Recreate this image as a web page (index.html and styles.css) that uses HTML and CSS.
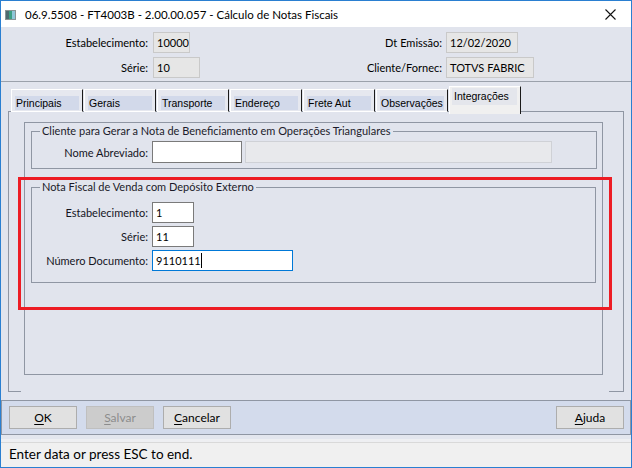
FILE: index.html
```html
<!DOCTYPE html>
<html lang="pt">
<head>
<meta charset="utf-8">
<title>Cálculo de Notas Fiscais</title>
<link rel="stylesheet" href="styles.css">
</head>
<body>
<div class="window">
  <div class="titlebar">
    <svg class="app-icon" width="11" height="10" viewBox="0 0 11 10">
      <rect x="0.5" y="0.5" width="10" height="9" fill="#dfe6e6" stroke="#8a9494"/>
      <rect x="1" y="1" width="3" height="8" fill="#4d6b70"/>
      <rect x="4" y="1" width="3" height="8" fill="#3c9f83"/>
      <rect x="7" y="1" width="3" height="8" fill="#8fc6d8"/>
    </svg>
    <span class="title-text">06.9.5508 - FT4003B - 2.00.00.057 - Cálculo de Notas Fiscais</span>
    <svg class="close-icon" width="11" height="11" viewBox="0 0 11 11">
      <path d="M0.5 0.5 L10.5 10.5 M10.5 0.5 L0.5 10.5" stroke="#111" stroke-width="1.1" fill="none"/>
    </svg>
  </div>

  <div class="header">
    <span class="lbl">Estabelecimento:</span>
    <span class="field"><span class="ro w37">10000</span></span>
    <span class="lbl lbl-r">Dt Emissão:</span>
    <span class="field"><span class="ro w72">12/02/2020</span></span>
    <span class="lbl">Série:</span>
    <span class="field"><span class="ro w47">10</span></span>
    <span class="lbl lbl-r">Cliente/Fornec:</span>
    <span class="field"><span class="ro w88">TOTVS FABRIC</span></span>
  </div>

  <div class="tabs">
    <div class="tab"><span class="tab-label">Principais</span></div>
    <div class="tab"><span class="tab-label">Gerais</span></div>
    <div class="tab"><span class="tab-label">Transporte</span></div>
    <div class="tab"><span class="tab-label">Endereço</span></div>
    <div class="tab"><span class="tab-label">Frete Aut</span></div>
    <div class="tab"><span class="tab-label">Observações</span></div>
    <div class="tab tab-active"><span class="tab-label">Integrações</span></div>
  </div>

  <div class="panel">
    <div class="inner">
      <fieldset class="group g1">
        <legend>Cliente para Gerar a Nota de Beneficiamento em Operações Triangulares</legend>
        <div class="row">
          <span class="glbl">Nome Abreviado:</span>
          <span class="inp w90"></span>
          <span class="inp-dis w307"></span>
        </div>
      </fieldset>
      <fieldset class="group g2">
        <legend>Nota Fiscal de Venda com Depósito Externo</legend>
        <div class="row">
          <span class="glbl">Estabelecimento:</span>
          <span class="inp w42">1</span>
        </div>
        <div class="row">
          <span class="glbl">Série:</span>
          <span class="inp w42">11</span>
        </div>
        <div class="row">
          <span class="glbl">Número Documento:</span>
          <span class="inp inp-focus w141"><span class="caret">9110111</span></span>
        </div>
      </fieldset>
    </div>
  </div>

  <div class="buttonbar">
    <button class="btn"><u>O</u>K</button>
    <button class="btn btn-dis"><u>S</u>alvar</button>
    <button class="btn"><u>C</u>ancelar</button>
    <span class="spacer"></span>
    <button class="btn"><u>A</u>juda</button>
  </div>
  <div class="strip"></div>
  <div class="status">Enter data or press ESC to end.</div>
</div>
<div class="highlight"></div>
</body>
</html>
```

FILE: styles.css
```css
* { box-sizing: border-box; }

html, body {
  margin: 0;
  padding: 0;
}

body {
  width: 632px;
  height: 468px;
  position: relative;
  font-family: "Lato", "Liberation Sans", sans-serif;
  font-size: 11px;
  color: #000;
  background: #ffffff;
  overflow: hidden;
}

.window {
  width: 632px;
  height: 468px;
  border: 1px solid #2a7fd1;
  background: #e1e4ed;
  display: flex;
  flex-direction: column;
}

/* title bar */
.titlebar {
  height: 26px;
  background: #ffffff;
  display: flex;
  align-items: center;
  padding-left: 4px;
  flex-shrink: 0;
}
.app-icon { margin-right: 9px; margin-top: 1px; }
.title-text {
  font-size: 11.5px;
  color: #000;
  flex: 1;
  white-space: nowrap;
}
.close-icon { margin-right: 15px; margin-top: 1px; }

/* header */
.header {
  flex-shrink: 0;
  display: grid;
  grid-template-columns: 152px 200px 93px 1fr;
  grid-auto-rows: 21px;
  row-gap: 4px;
  padding: 5px 0 3px;
  border-bottom: 1px solid #9ba1ab;
  height: 55px;
}
.lbl {
  text-align: right;
  padding-right: 5px;
  align-self: center;
  white-space: nowrap;
}
.lbl-r { padding-right: 4px; }
.field { display: flex; align-items: stretch; }
.ro {
  display: flex;
  align-items: center;
  height: 21px;
  padding-left: 3px;
  background: #e6e6e6;
  border: 1px solid #c9c9c9;
  white-space: nowrap;
  overflow: hidden;
}
.w37 { width: 37px; }
.w47 { width: 47px; }
.w72 { width: 72px; }
.w88 { width: 88px; }

/* tabs */
.tabs {
  position: relative;
  z-index: 1;
  flex-shrink: 0;
  height: 30px;
  margin-bottom: -1px;
  padding-left: 10px;
  display: flex;
  align-items: flex-end;
  gap: 1px;
}
.tab {
  width: 72px;
  height: 23px;
  background: #e6e8ef;
  border-top: 1px solid #ffffff;
  border-left: 1px solid #ffffff;
  border-bottom: 1px solid #ffffff;
  border-right: 1px solid #1a1a1a;
  padding: 6px 0 0 3px;
  font-family: "Liberation Sans", Arial, sans-serif;
  font-size: 10.5px;
}
.tab-label {
  display: block;
  width: 64px;
  height: 14px;
  line-height: 14px;
  padding-left: 1px;
  background: #d2d9ea;
  white-space: nowrap;
}
.tab-active {
  height: 28px;
  margin-bottom: -2px;
  background: #f0f0f0;
  border-bottom: none;
  padding: 1px 0 0 2px;
}
.tab-active .tab-label {
  width: 65px;
  height: 17px;
  line-height: 17px;
  padding-left: 2px;
  background: #e4e6ec;
}

/* tab panel */
.panel {
  flex-shrink: 0;
  height: 281px;
  margin: 0 7px 8px;
  border: 1px solid #8f96a3;
  border-bottom: none;
  padding: 10px 20px 0 15px;
  background:
    linear-gradient(#8f96a3, #8f96a3) left bottom / 12px 1px no-repeat,
    linear-gradient(#8f96a3, #8f96a3) right bottom / 14px 1px no-repeat,
    #e1e4ed;
}
.inner {
  height: 253px;
  border: 1px solid #8f96a3;
  padding: 0 5px 0 6px;
}

.group {
  margin: 1px 0 0;
  border: 1px solid #8f96a3;
  padding: 3px 0 5px 8px;
  min-width: 0;
}
.group legend {
  padding: 0 2px;
  line-height: 14px;
  font-size: 11px;
  color: #1b1b2a;
  white-space: nowrap;
}
.g2 {
  margin-top: 11px;
  padding: 8px 0 11px 8px;
  margin-right: 1px;
  display: block;
}
.g2 .row + .row { margin-top: 3px; }

.row {
  display: flex;
  align-items: center;
}
.glbl {
  width: 112px;
  text-align: right;
  padding-right: 4px;
  white-space: nowrap;
  color: #14141e;
}
.inp {
  display: flex;
  align-items: center;
  height: 21px;
  padding-left: 3px;
  background: #ffffff;
  border: 1px solid #7a7a7a;
  white-space: nowrap;
}
.g1 .inp, .g1 .inp-dis { height: 22px; }
.inp-dis {
  display: block;
  height: 22px;
  margin-left: 3px;
  background: #e8e9ec;
  border: 1px solid #cfd1d6;
}
.inp-focus { border-color: #0078d7; }
.caret { border-right: 1px solid #000; padding-right: 0; line-height: 15px; }
.w90 { width: 90px; }
.w307 { width: 307px; }
.w42 { width: 42px; }
.w141 { width: 141px; }

/* button bar */
.buttonbar {
  flex-shrink: 0;
  height: 35px;
  background: #d3dbec;
  border: 1px solid #8f96a3;
  display: flex;
  align-items: flex-start;
  padding: 5px 6px 0 7px;
  gap: 9px;
}
.spacer { flex: 1; }
.btn {
  width: 68px;
  height: 23px;
  margin: 0;
  padding: 0;
  background: #e1e1e1;
  border: 1px solid #adadad;
  font-family: "Lato", "Liberation Sans", sans-serif;
  font-size: 12px;
  color: #000;
}
.btn u { text-underline-offset: 2px; }
.btn-dis {
  background: #cccccc;
  border-color: #bfbfbf;
  color: #8c8c8c;
}

.strip {
  flex-shrink: 0;
  height: 7px;
  background: linear-gradient(#e3e6ee 0 4px, #eeeff2 4px);
}

.status {
  flex-shrink: 0;
  height: 25px;
  border-top: 1px solid #d9d9d9;
  background: #f0f0f0;
  padding-left: 8px;
  font-size: 13.5px;
  line-height: 23px;
  color: #000;
}

/* red annotation rectangle over the content */
.highlight {
  position: absolute;
  left: 18px;
  top: 177px;
  width: 594px;
  height: 133px;
  border: 3px solid #ed1c24;
  pointer-events: none;
}
```
